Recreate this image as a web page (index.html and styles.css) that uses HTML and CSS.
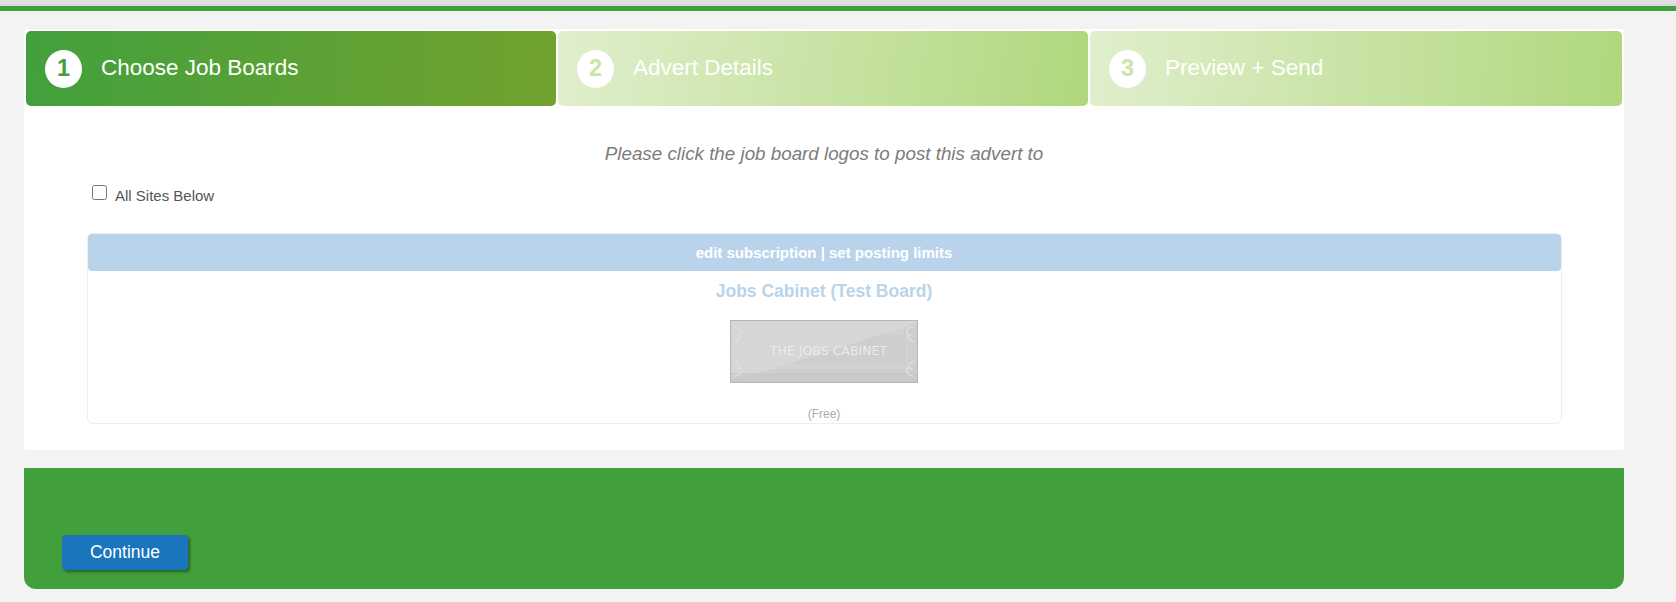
FILE: index.html
```html
<!DOCTYPE html>
<html lang="en">
<head>
    <meta charset="UTF-8">
    <meta name="viewport" content="width=device-width, initial-scale=1.0">
    <title>Choose Job Boards</title>
    <link rel="stylesheet" href="styles.css">
</head>
<body>
    <div class="topbar"></div>

    <div class="container">
        <div class="panel">
            <div class="steps">
                <div class="step step-active">
                    <span class="step-num">1</span>
                    <span class="step-label">Choose Job Boards</span>
                </div>
                <div class="step">
                    <span class="step-num">2</span>
                    <span class="step-label">Advert Details</span>
                </div>
                <div class="step step-last">
                    <span class="step-num">3</span>
                    <span class="step-label">Preview + Send</span>
                </div>
            </div>

            <p class="intro">Please click the job board logos to post this advert to</p>

            <label class="all-sites">
                <input type="checkbox" class="all-check">
                <span>All Sites Below</span>
            </label>

            <div class="board">
                <div class="board-head">edit subscription | set posting limits</div>
                <h2 class="board-title">Jobs Cabinet (Test Board)</h2>
                <svg class="board-logo" viewBox="0 0 188 63" width="188" height="63">
                    <rect width="188" height="63" fill="#cecece"/>
                    <polygon points="0,0 188,0 188,3 20,56 0,60" fill="#d6d6d6"/>
                    <rect x="0" y="53" width="188" height="10" fill="#c8c8c8" opacity="0.7"/>
                    <path d="M14 10H174M14 13H174M14 45H174M14 48H174" fill="none" stroke="#d9d9d9"/>
                    <path d="M11 13V45M177 13V45" fill="none" stroke="#d6d6d6"/>
                    <path d="M4 7c4 0 8 2 7 6c-1 3-5 2-5 0M4 22c3-1 6-4 7-9M184 7c-4 0-8 2-7 6c1 3 5 2 5 0M184 22c-3-1-6-4-7-9M4 56c4 0 8-2 7-6c-1-3-5-2-5 0M4 41c3 1 6 4 7 9M184 56c-4 0-8-2-7-6c1-3 5-2 5 0M184 41c-3 1-6 4-7 9" fill="none" stroke="#dedede" stroke-width="1.5"/>
                    <text x="98.5" y="35" class="logo-text" text-anchor="middle">THE JOBS CABINET</text>
                    <rect x="0.5" y="0.5" width="187" height="62" fill="none" stroke="#bfb4b4"/>
                </svg>
                <div class="board-price">(Free)</div>
            </div>
        </div>

        <div class="footer">
            <button type="button" class="continue">Continue</button>
        </div>
    </div>
</body>
</html>
```

FILE: styles.css
```css
html, body {
    height: 100%;
}

body {
    font-family: "Liberation Sans", Arial, sans-serif;
    margin: 0;
    padding: 0;
    background-color: #f3f3f3;
    color: #555;
    overflow: hidden;
}

.topbar {
    height: 6px;
    background: linear-gradient(#e4e4e4, #d9d9d9);
    border-bottom: 5px solid #42a03c;
}

.container {
    width: 1600px;
    margin: 18px 0 0 24px;
}

.panel {
    background-color: #fff;
    border-radius: 3px;
    height: 421px;
    box-sizing: border-box;
    padding: 2px 2px 0;
}

.steps {
    display: flex;
    gap: 2px;
}

.step {
    width: 530px;
    box-sizing: border-box;
    height: 75px;
    display: flex;
    align-items: center;
    padding-left: 19px;
    border-radius: 5px;
    color: #fff;
    background: linear-gradient(95deg, #e0efcd 0%, #b0d77d 100%);
}

.step-last {
    flex: 1;
}

.step-active {
    background: linear-gradient(95deg, #42a03c 0%, #72a22f 100%);
}

.step-num {
    width: 37px;
    height: 38px;
    border-radius: 50%;
    background-color: #fff;
    color: #cbe4a9;
    font-size: 23.5px;
    font-weight: bold;
    display: flex;
    align-items: center;
    justify-content: center;
    margin-right: 19px;
}

.step-active .step-num {
    color: #42a03c;
}

.step-label {
    font-size: 22.5px;
    position: relative;
    top: -1px;
}

.intro {
    margin: 36px 0 0;
    text-align: center;
    font-size: 18.8px;
    font-style: italic;
    color: #7c7c7c;
    line-height: 24px;
}

.all-sites {
    display: flex;
    align-items: center;
    margin: 19px 0 0 66px;
    font-size: 15px;
    height: 20px;
}

.all-check {
    width: 15px;
    height: 15px;
    margin: 0 8px 0 0;
    position: relative;
    top: -3px;
}

.board {
    margin: 28px 0 0 60.5px;
    width: 1475px;
    height: 191px;
    box-sizing: border-box;
    border: 1px solid #eee;
    border-radius: 6px;
    text-align: center;
}

.board-head {
    height: 37px;
    line-height: 37px;
    background-color: #b9d4ea;
    border-radius: 4px;
    color: #fff;
    font-size: 15px;
    font-weight: bold;
}

.board-title {
    margin: 8px 0 0;
    font-size: 17.5px;
    line-height: 24px;
    color: #b9d4ea;
}

.board-logo {
    display: block;
    margin: 17px auto 0;
}

.logo-text {
    font-family: "DejaVu Sans", sans-serif;
    font-size: 12.5px;
    fill: #ebebeb;
}

.board-price {
    margin-top: 24px;
    font-size: 12px;
    line-height: 14px;
    color: #aaa;
}

.footer {
    margin-top: 18px;
    height: 121px;
    box-sizing: border-box;
    padding: 67px 0 0 38px;
    background-color: #42a03c;
    border-radius: 0 0 12px 12px;
}

.continue {
    display: block;
    width: 126px;
    height: 35px;
    padding: 0;
    border: none;
    border-radius: 4px;
    background-color: #1b75bc;
    color: #fff;
    font-family: inherit;
    font-size: 17.5px;
    box-shadow: 2px 2px 3px rgba(0, 0, 0, 0.4);
    cursor: pointer;
}
```
